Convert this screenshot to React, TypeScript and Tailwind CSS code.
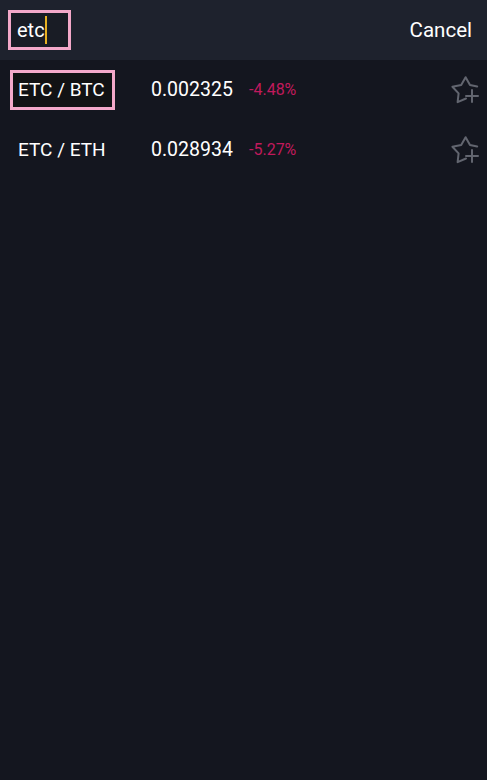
import React from 'react';

const pairs = [
    { name: 'ETC / BTC', price: '0.002325', change: '-4.48%', marked: true },
    { name: 'ETC / ETH', price: '0.028934', change: '-5.27%', marked: false },
];

function StarPlus() {
    return (
        <svg width="30" height="30" viewBox="0 0 30 30" fill="none" stroke="#62656f" strokeWidth="2" strokeLinejoin="round" strokeLinecap="round">
            <path d="M17 23.5 L8.6 27.2 L9.6 18.4 L3.4 11.8 L12.2 10 L16.6 2.2 L21 10 L28.2 11.6" />
            <path d="M23 15 V27 M17 21 H29" />
        </svg>
    );
}

export default function App() {
    return (
        <div className="w-[487px] h-[780px] bg-[#14161f] text-white flex flex-col" style={{ fontFamily: 'Roboto, "Liberation Sans", sans-serif' }}>
            {/* Search header */}
            <div className="h-[60px] bg-[#1e222d] flex items-center justify-between pl-2 pr-[15px] shrink-0">
                <div className="w-[63px] h-[40px] border-[3px] border-[#f3a8c9] bg-[#191c25] flex items-center pl-[6px]">
                    <span className="text-[20px] leading-none">etc</span>
                    <span className="w-[2px] h-[28px] bg-[#e8b021]" />
                </div>
                <button className="text-[20.5px] text-white">Cancel</button>
            </div>

            {/* Results */}
            <div className="flex flex-col">
                {pairs.map((p) => (
                    <div key={p.name} className="h-[60px] flex items-center pl-[10px] pr-[8px]">
                        <div className={`w-[105px] h-[40px] flex items-center pl-[5px] border-[3px] ${p.marked ? 'border-[#f3a8c9] bg-[#111214]' : 'border-transparent'}`}>
                            <span className="text-[19px]">{p.name}</span>
                        </div>
                        <span className="ml-[36px] w-[98px] text-[19.5px]">{p.price}</span>
                        <span className="text-[16px] text-[#c11a5c]">{p.change}</span>
                        <div className="ml-auto">
                            <StarPlus />
                        </div>
                    </div>
                ))}
            </div>
        </div>
    );
}
